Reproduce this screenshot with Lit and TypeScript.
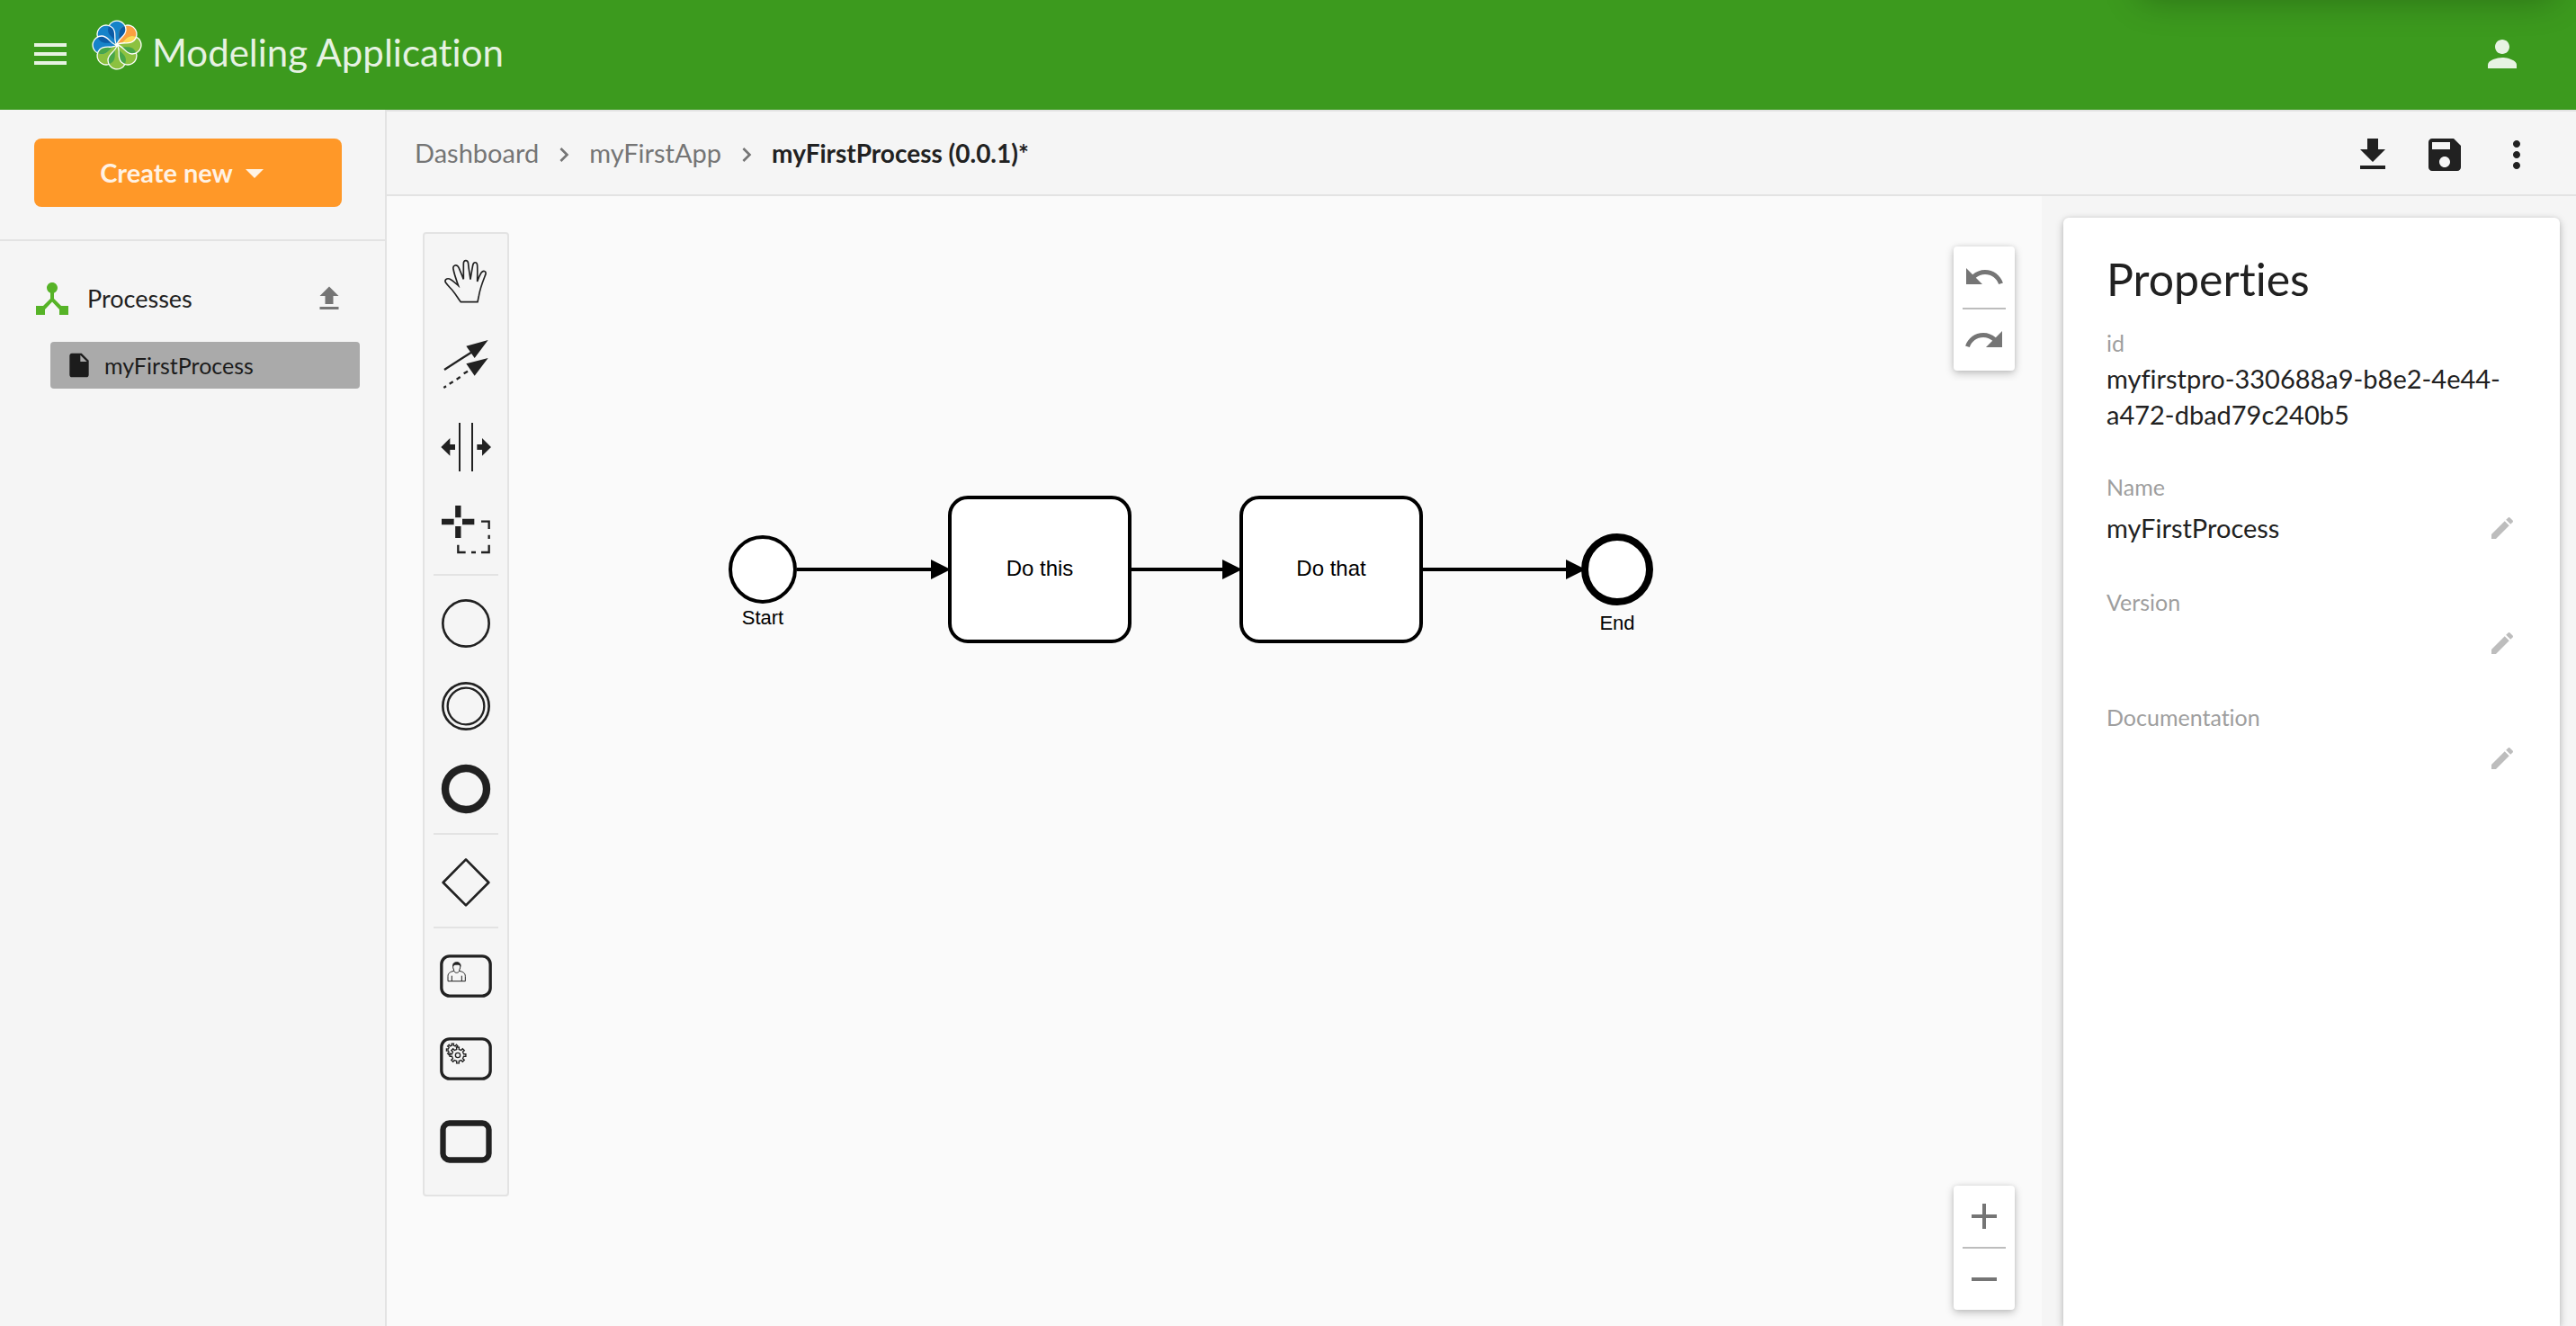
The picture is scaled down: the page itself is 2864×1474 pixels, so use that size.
import { LitElement, html, svg, css } from "lit";
import { customElement } from "lit/decorators.js";

const FONT = css`"Lato", "Open Sans", sans-serif`;

const PATHS = {
  menu: "M3 18h18v-2H3v2zm0-5h18v-2H3v2zm0-7v2h18V6H3z",
  person: "M12 12c2.21 0 4-1.79 4-4s-1.79-4-4-4-4 1.79-4 4 1.79 4 4 4zm0 2c-2.67 0-8 1.34-8 4v2h16v-2c0-2.66-5.33-4-8-4z",
  dropDown: "M7 10l5 5 5-5z",
  hub: "M17 16l-4-4V8.82C14.16 8.4 15 7.3 15 6c0-1.66-1.34-3-3-3S9 4.34 9 6c0 1.3.84 2.4 2 2.82V12l-4 4H3v5h5v-3.05l4-4.2 4 4.2V21h5v-5h-4z",
  upload: "M9 16h6v-6h4l-7-7-7 7h4zm-4 2h14v2H5z",
  file: "M6 2c-1.1 0-1.99.9-1.99 2L4 20c0 1.1.89 2 1.99 2H18c1.1 0 2-.9 2-2V8l-6-6H6zm7 7V3.5L18.5 9H13z",
  chevron: "M10 6L8.59 7.41 13.17 12l-4.58 4.59L10 18l6-6z",
  download: "M19 9h-4V3H9v6H5l7 7 7-7zM5 18v2h14v-2H5z",
  save: "M17 3H5c-1.11 0-2 .9-2 2v14c0 1.1.89 2 2 2h14c1.1 0 2-.9 2-2V7l-4-4zm-5 16c-1.66 0-3-1.34-3-3s1.34-3 3-3 3 1.34 3 3-1.34 3-3 3zm3-10H5V5h10v4z",
  more: "M12 8c1.1 0 2-.9 2-2s-.9-2-2-2-2 .9-2 2 .9 2 2 2zm0 2c-1.1 0-2 .9-2 2s.9 2 2 2 2-.9 2-2-.9-2-2-2zm0 6c-1.1 0-2 .9-2 2s.9 2 2 2 2-.9 2-2-.9-2-2-2z",
  undo: "M12.5 8c-2.65 0-5.05.99-6.9 2.6L2 7v9h9l-3.62-3.62c1.39-1.16 3.16-1.88 5.12-1.88 3.54 0 6.55 2.31 7.6 5.5l2.37-.78C21.08 11.03 17.15 8 12.5 8z",
  redo: "M18.4 10.6C16.55 8.99 14.15 8 11.5 8c-4.65 0-8.58 3.03-9.96 7.22L3.9 16c1.05-3.19 4.05-5.5 7.6-5.5 1.95 0 3.73.72 5.12 1.88L13 16h9V7l-3.6 3.6z",
  plus: "M19 13h-6v6h-2v-6H5v-2h6V5h2v6h6v2z",
  minus: "M19 13H5v-2h14v2z",
  edit: "M3 17.25V21h3.75L17.81 9.94l-3.75-3.75L3 17.25zM20.71 7.04c.39-.39.39-1.02 0-1.41l-2.34-2.34c-.39-.39-1.02-.39-1.41 0l-1.83 1.83 3.75 3.75 1.83-1.83z",
};

const icon = (name: keyof typeof PATHS, size = 48) =>
  html`<svg class="icon" width=${size} height=${size} viewBox="0 0 24 24" aria-hidden="true"><path d=${PATHS[name]}></path></svg>`;

/* Outline of a cog wheel with n square teeth. */
function cog(cx: number, cy: number, inner: number, outer: number, n: number): string {
  const step = (Math.PI * 2) / n;
  const pt = (r: number, a: number) => `${(cx + r * Math.cos(a)).toFixed(1)} ${(cy + r * Math.sin(a)).toFixed(1)}`;
  const out: string[] = [];
  for (let i = 0; i < n; i++) {
    const a = i * step - Math.PI / 2;
    out.push(pt(inner, a - step * 0.24), pt(outer, a - step * 0.2), pt(outer, a + step * 0.2), pt(inner, a + step * 0.24));
  }
  return `M${out.join("L")}Z`;
}

/* Flower logo: eight petals, neighbours share a darker lens. */
const PETAL = "M0 0C-1 -8 -10 -9 -10 -17A10 10 0 0 1 10 -17C10 -9 1 -8 0 0Z";
const EDGE = "M-8.9 -21.5A10 10 0 0 1 10 -17C10 -9 1 -8 0 0";
const PETAL_FILL = ["#1683c9", "#fba040", "#8cc140", "#8cc140", "#8cc140", "#8cc140", "#1683c9", "#1683c9"];
const LENS_FILL = ["#0c5ca6", "#ffdb58", "#48a649", "#48a649", "#48a649", "#48a649", "#0c5ca6", "#0c5ca6"];

const logo = html`<svg class="logo" width="56" height="56" viewBox="-28 -28 56 56" aria-hidden="true">
  <defs>${PETAL_FILL.map((_, i) => svg`<clipPath id=${"petal" + i}><path d=${PETAL} transform=${`rotate(${i * 45})`}></path></clipPath>`)}</defs>
  ${PETAL_FILL.map((c, i) => svg`<path d=${PETAL} fill=${c} transform=${`rotate(${i * 45})`}></path>`)}
  ${LENS_FILL.map((c, i) => svg`<g clip-path=${`url(#petal${(i + 1) % 8})`}><path d=${PETAL} fill=${c} transform=${`rotate(${i * 45})`}></path></g>`)}
  ${PETAL_FILL.map((_, i) => svg`<path d=${EDGE} fill="none" stroke="#fff" stroke-width="1.3" transform=${`rotate(${i * 45})`}></path>`)}
  <circle r="2" fill="#fff"></circle>
</svg>`;

interface Tool { label: string; y: number; art: unknown; gap?: boolean }

const TOOLS: Tool[] = [
  { label: "Hand tool", y: 51, art: svg`<path fill="none" stroke-width="5" d="M157 257H213L217 237C222 207 234 180 240 164C242 154 232 150 225 160C219 169 215 180 212 189C212 170 213 150 212 135C211 122 199 122 197 135C194 152 191 168 189 182C187 165 183 145 182 130C181 115 166 115 166 130C166 148 166 165 166 181C160 165 154 152 150 142C144 130 129 134 132 147C135 166 143 185 149 203C140 195 128 183 119 180C110 177 101 184 107 193C115 205 125 212 132 222C142 234 149 247 157 257Z"></path>` },
  { label: "Global connect tool", y: 327, art: svg`<path fill="none" stroke-width="7" d="M102 483L192 425"></path><path stroke="none" d="M248 384L175 404L203 444ZM248 444L175 463L203 503Z"></path><path fill="none" stroke-width="7" d="M100 543L108 538M119 530L131 523M143 515L155 507M167 496L180 488"></path>` },
  { label: "Space tool", y: 603, art: svg`<path fill="none" stroke-width="6" d="M153 660V822M195 660V822"></path><path stroke="none" d="M91 741L121 711V732H138V750H121V770ZM258 741L228 711V732H211V750H228V770Z"></path>` },
  { label: "Lasso tool", y: 879, art: svg`<path fill="none" stroke-width="19" d="M148 936V976M148 1005V1044M93 990H134M162 990H202"></path><path fill="none" stroke-width="7" d="M225 989H251V1014M251 1034V1047M251 1067V1092H225M207 1092H192M173 1092H148V1067"></path>` },
  { label: "Start event", y: 51, gap: true, art: svg`<circle cx="174" cy="189" r="77" fill="none" stroke-width="8"></circle>` },
  { label: "Intermediate event", y: 327, art: svg`<circle cx="174" cy="465" r="77" fill="none" stroke-width="8"></circle><circle cx="174" cy="465" r="61" fill="none" stroke-width="7"></circle>` },
  { label: "End event", y: 603, art: svg`<circle cx="174" cy="741" r="69" fill="none" stroke-width="25"></circle>` },
  { label: "Gateway", y: 915, gap: true, art: svg`<path fill="none" stroke-width="8" stroke-linejoin="round" d="M174 976L250 1053L174 1129L98 1053Z"></path>` },
  { label: "User task", y: 57, gap: true, art: svg`<rect x="92.500" y="128.500" width="163" height="133" rx="27" fill="none" stroke-width="10"></rect>
    <path fill="none" stroke-width="3" d="M114 212V196C114 186 120 181 134 178C138 186 148 186 152 178C166 181 172 186 172 196V212ZM127 212V194M160 212V194M134 178C135 173 130 170 131 163C130 152 156 152 155 163C156 170 151 173 152 178"></path>
    <path stroke-width="2" d="M131 163C126 144 160 143 156 163C154 156 149 156 144 157C138 158 133 156 131 163Z"></path>` },
  { label: "Service task", y: 333, art: svg`<rect x="92.500" y="404.500" width="163" height="133" rx="27" fill="none" stroke-width="10"></rect>
    <path fill="#f5f5f5" stroke-width="4" d=${cog(130, 441, 15, 21, 8)}></path>
    <path fill="#f5f5f5" stroke-width="4" d=${cog(147, 459, 20, 27, 8)}></path>
    <circle cx="147" cy="459" r="8" fill="none" stroke-width="4"></circle>` },
  { label: "Sub process", y: 609, art: svg`<rect x="97.500" y="685.500" width="153" height="123" rx="22" fill="none" stroke-width="19"></rect>` },
];

@customElement("model-header")
class ModelHeader extends LitElement {
  static styles = css`
    :host { display: block; }
    .bar { position: relative; display: flex; align-items: flex-start; height: 122px; box-sizing: border-box; padding: 22px 58px 0 32px; background: #3c9a1e; color: rgba(255, 255, 255, 0.88); overflow: hidden; font-family: ${FONT}; }
    .shade { position: absolute; top: -60px; right: 24px; width: 460px; height: 52px; box-shadow: 0 6px 40px rgba(0, 0, 0, 0.3); border-radius: 8px; }
    .btn { display: block; margin-top: 14px; padding: 0; border: 0; background: none; color: inherit; cursor: pointer; }
    .icon { display: block; fill: currentColor; }
    .logo { display: block; margin-left: 22px; }
    .title { flex: 1; margin: 12px 0 0; padding-left: 11px; font-size: 42px; line-height: 48px; font-weight: 400; font-variant-ligatures: none; }
  `;
  render() {
    return html`<header class="bar">
      <div class="shade"></div>
      <button class="btn" aria-label="Menu">${icon("menu")}</button>
      ${logo}
      <h1 class="title">Modeling Application</h1>
      <button class="btn" aria-label="Account">${icon("person")}</button>
    </header>`;
  }
}

@customElement("model-sidebar")
class ModelSidebar extends LitElement {
  static styles = css`
    :host { display: block; width: 428px; flex: none; border-right: 2px solid #e3e3e3; background: #f5f5f5; font-family: ${FONT}; font-variant-ligatures: none; color: #212121; }
    .top { padding: 32px 48px 36px 38px; border-bottom: 2px solid #e3e3e3; }
    .create { display: flex; align-items: center; justify-content: center; width: 100%; height: 76px; padding: 0; border: 0; border-radius: 8px; background: #ff9828; color: rgba(255, 255, 255, 0.88); font-family: inherit; font-size: 29px; line-height: 40px; font-weight: 700; cursor: pointer; }
    .icon { display: block; fill: currentColor; }
    .head { display: flex; align-items: center; gap: 15px; margin-top: 40px; padding: 0 44px 0 34px; }
    .hub { color: #56b327; }
    .name { flex: 1; margin: 0; font-size: 27px; line-height: 40px; font-weight: 400; }
    .up { padding: 0; border: 0; background: none; color: #757575; cursor: pointer; }
    .list { list-style: none; margin: 24px 28px 0 56px; padding: 0; }
    .item { display: flex; align-items: center; gap: 12px; height: 52px; padding: 0 16px; border-radius: 4px; background: #aaaaaa; color: #1c1c1c; font-size: 25px; line-height: 32px; text-decoration: none; }
  `;
  render() {
    return html`<div class="top"><button class="create">Create new${icon("dropDown")}</button></div>
      <div class="head">
        <span class="hub">${icon("hub")}</span>
        <h2 class="name">Processes</h2>
        <button class="up" aria-label="Upload process">${icon("upload", 36)}</button>
      </div>
      <ul class="list"><li><a class="item" href="#process">${icon("file", 32)}<span>myFirstProcess</span></a></li></ul>`;
  }
}

@customElement("model-toolbar")
class ModelToolbar extends LitElement {
  static styles = css`
    :host { display: block; font-family: ${FONT}; font-variant-ligatures: none; }
    .bar { display: flex; align-items: center; justify-content: space-between; height: 92px; padding: 0 42px 0 31px; border-top: 2px solid #e3e3e3; border-bottom: 2px solid #e3e3e3; background: #f5f5f5; }
    .crumbs { display: flex; align-items: center; gap: 12px; font-size: 29px; line-height: 40px; color: #757575; }
    .link { color: inherit; text-decoration: none; }
    .here { font-size: 28px; font-weight: 700; color: #212121; }
    .icon { display: block; fill: currentColor; }
    .crumbs .icon { margin-top: 4px; }
    .actions { display: flex; gap: 32px; padding-top: 4px; color: #212121; }
    .btn { padding: 0; border: 0; background: none; color: inherit; cursor: pointer; }
  `;
  render() {
    return html`<div class="bar">
      <nav class="crumbs" aria-label="Breadcrumb">
        <a class="link" href="#dashboard">Dashboard</a>${icon("chevron", 32)}
        <a class="link" href="#app">myFirstApp</a>${icon("chevron", 32)}
        <span class="here">myFirstProcess (0.0.1)*</span>
      </nav>
      <div class="actions">
        <button class="btn" aria-label="Download">${icon("download")}</button>
        <button class="btn" aria-label="Save">${icon("save")}</button>
        <button class="btn" aria-label="More options">${icon("more")}</button>
      </div>
    </div>`;
  }
}

@customElement("model-canvas")
class ModelCanvas extends LitElement {
  static styles = css`
    :host { display: block; position: relative; flex: 1; min-width: 0; background: #fafafa; }
    .diagram { position: absolute; inset: 0; width: 100%; height: 100%; font-family: "Liberation Sans", Arial, sans-serif; }
    .shape { fill: #fff; stroke: #000; stroke-width: 4; }
    .end { stroke-width: 8; }
    .flow { stroke: #000; stroke-width: 4; }
    .text { font-size: 24px; text-anchor: middle; fill: #000; }
    .caption { font-size: 22px; }
    .palette { position: absolute; left: 40px; top: 40px; display: flex; flex-direction: column; padding: 7px 0 13px; border: 2px solid #e3e3e3; border-radius: 4px; background: #f5f5f5; }
    .tool { display: block; width: 92px; height: 92px; padding: 0; border: 0; background: none; cursor: pointer; }
    .art { display: block; fill: #212121; stroke: #212121; }
    .rule { height: 2px; margin: 3px 10px 7px; border: 0; background: #e3e3e3; }
    .box { position: absolute; right: 30px; display: flex; flex-direction: column; align-items: center; width: 68px; border-radius: 4px; background: #fff; box-shadow: 0 3px 10px rgba(0, 0, 0, 0.24), 0 0 4px rgba(0, 0, 0, 0.08); color: #757575; }
    .history { top: 56px; }
    .zoom { bottom: 18px; }
    .btn { display: flex; align-items: center; justify-content: center; width: 68px; height: 68px; padding: 0; border: 0; background: none; color: inherit; cursor: pointer; }
    .line { width: 48px; height: 2px; margin: 0; border: 0; background: #bdbdbd; }
    .icon { display: block; fill: currentColor; }
  `;
  render() {
    return html`<svg class="diagram" role="img" aria-label="Process diagram">
        <path class="flow" d="M456 415H606M828 415H930M1152 415H1312"></path>
        <path d="M605 404L627 415L605 426ZM929 404L951 415L929 426ZM1311 404L1333 415L1311 426Z"></path>
        <circle class="shape" cx="418" cy="415" r="36"></circle>
        <rect class="shape" x="626" y="335" width="200" height="160" rx="20"></rect>
        <rect class="shape" x="950" y="335" width="200" height="160" rx="20"></rect>
        <circle class="shape end" cx="1368" cy="415" r="36"></circle>
        <text class="text caption" x="418" y="476">Start</text>
        <text class="text" x="726" y="422">Do this</text>
        <text class="text" x="1050" y="422">Do that</text>
        <text class="text caption" x="1368" y="482">End</text>
      </svg>
      <div class="palette">
        ${TOOLS.map((t) => html`${t.gap ? html`<hr class="rule" />` : ""}<button class="tool" aria-label=${t.label}>
          <svg class="art" width="92" height="92" viewBox=${`36 ${t.y} 276 276`} aria-hidden="true">${t.art}</svg></button>`)}
      </div>
      <div class="box history">
        <button class="btn" aria-label="Undo">${icon("undo")}</button><hr class="line" />
        <button class="btn" aria-label="Redo">${icon("redo")}</button>
      </div>
      <div class="box zoom">
        <button class="btn" aria-label="Zoom in">${icon("plus")}</button><hr class="line" />
        <button class="btn" aria-label="Zoom out">${icon("minus")}</button>
      </div>`;
  }
}

@customElement("model-properties")
class ModelProperties extends LitElement {
  static styles = css`
    :host { display: flex; flex: none; width: 594px; box-sizing: border-box; padding: 24px 18px 0 24px; background: #f5f5f5; overflow: hidden; font-family: ${FONT}; font-variant-ligatures: none; color: #212121; }
    .card { flex: 1; min-width: 0; padding: 38px 48px 40px; border-radius: 6px 6px 0 0; background: #fff; box-shadow: 0 3px 10px rgba(0, 0, 0, 0.24), 0 0 4px rgba(0, 0, 0, 0.08); }
    .title { margin: 0 0 25px; font-size: 50px; line-height: 60px; font-weight: 400; }
    .fields { display: flex; flex-direction: column; gap: 44px; margin: 0; }
    .label { font-size: 25px; line-height: 32px; color: #9e9e9e; }
    .value { margin: 4px 0 0; font-size: 29px; line-height: 40px; }
    .editable { display: flex; align-items: center; justify-content: space-between; height: 44px; padding-top: 4px; }
    .btn { margin-left: auto; padding: 0; border: 0; background: none; color: #bdbdbd; cursor: pointer; }
    .icon { display: block; fill: currentColor; }
  `;
  render() {
    const fields = [["Name", "myFirstProcess"], ["Version", ""], ["Documentation", ""]];
    return html`<section class="card">
      <h2 class="title">Properties</h2>
      <dl class="fields">
        <div><dt class="label">id</dt><dd class="value">myfirstpro-330688a9-b8e2-4e44-a472-dbad79c240b5</dd></div>
        ${fields.map(([label, value]) => html`<div><dt class="label">${label}</dt>
          <dd class="value editable"><span>${value}</span><button class="btn" aria-label=${`Edit ${label}`}>${icon("edit", 32)}</button></dd></div>`)}
      </dl>
    </section>`;
  }
}

@customElement("app-root")
class AppRoot extends LitElement {
  static styles = css`
    :host { display: flex; flex-direction: column; min-height: 100vh; background: #f5f5f5; }
    .body { display: flex; flex: 1; }
    .main { display: flex; flex-direction: column; flex: 1; min-width: 0; }
    .work { display: flex; flex: 1; }
  `;
  render() {
    return html`<model-header></model-header>
      <div class="body">
        <model-sidebar></model-sidebar>
        <main class="main">
          <model-toolbar></model-toolbar>
          <div class="work"><model-canvas></model-canvas><model-properties></model-properties></div>
        </main>
      </div>`;
  }
}
